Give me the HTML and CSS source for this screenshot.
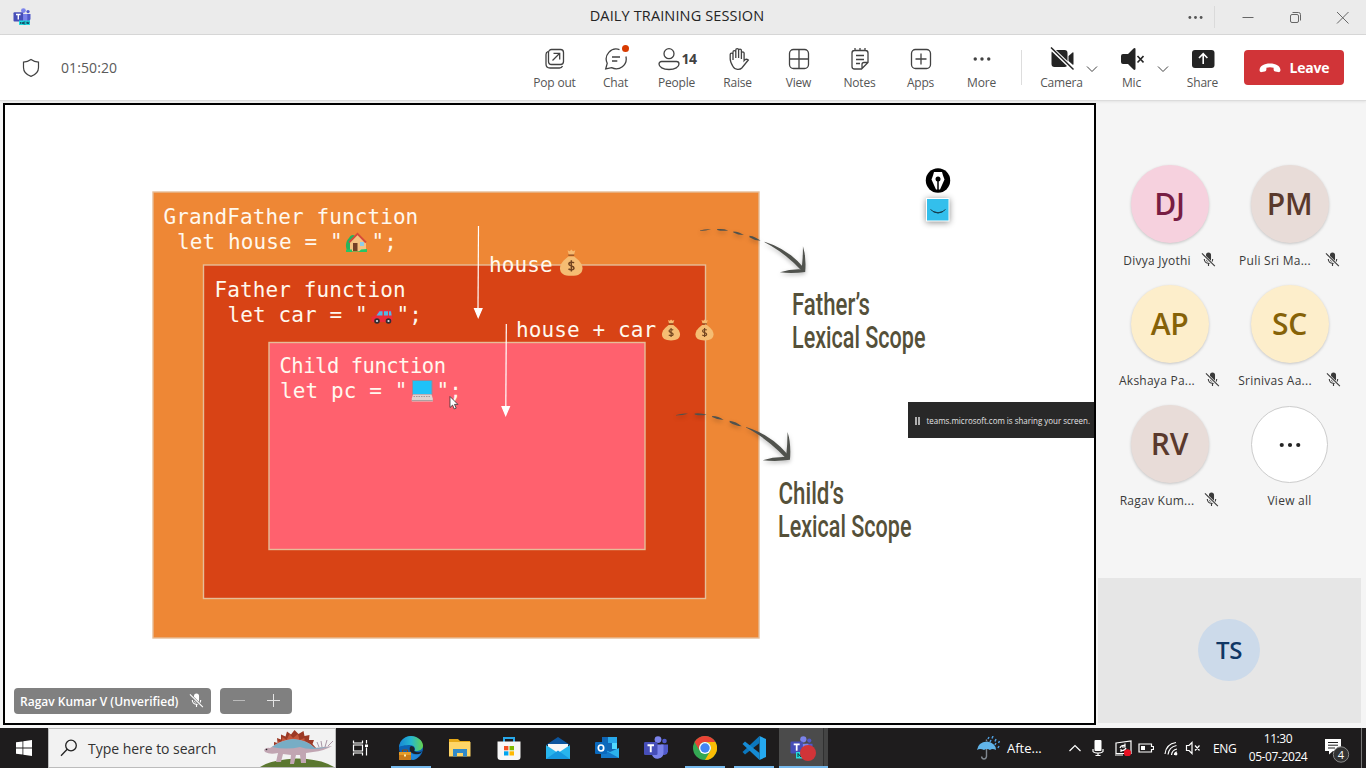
FILE: index.html
```html
<!DOCTYPE html>
<html lang="en">
<head>
<meta charset="utf-8">
<title>DAILY TRAINING SESSION</title>
<link rel="stylesheet" href="styles.css">
</head>
<body>
<svg class="defs" aria-hidden="true">
  <defs>
    <symbol id="mic-off" viewBox="0 0 16 16">
      <path d="M5.3 3.2a2.7 2.7 0 0 1 5.4 0v4.6a2.7 2.7 0 0 1-5.4 0z" fill="currentColor"/>
      <path d="M3.5 7.5a4.5 4.5 0 0 0 9 0M8 12v3" fill="none" stroke="currentColor" stroke-width="1.2"/>
      <path d="M1.3 2.2L14.2 14.8" stroke="var(--gap)" stroke-width="2.8"/>
      <path d="M1 1.5L14.8 15" stroke="currentColor" stroke-width="1.2"/>
    </symbol>
    <symbol id="bag" viewBox="0 0 24 28">
      <path d="M8.2 1.2l2.3 1 1.6-1.7 1.7 1.7 2.4-1-1.5 5H9.6z" fill="#f7b96f"/>
      <path d="M9 5.5h6v1.4H9z" fill="#8b4a20"/>
      <path d="M9 7.5h6c4 3 8.5 7 8.5 12 0 5.5-4 7.8-11.500 7.800S.5 25 .5 19.500C.5 14.500 5 10.500 9 7.500z" fill="#f5bd73"/>
      <path d="M14.800 14.200c-1-1.200-5.300-1.300-5.300 1.200s5.300 1.500 5.300 4c0 2.400-4.300 2.300-5.600.8M12.100 11.500v11.500" fill="none" stroke="#714420" stroke-width="1.500"/>
    </symbol>
    <symbol id="scope-arrow" viewBox="0 0 108 48">
      <g fill="#50524d">
        <path d="M1 5.500q6-1.900 11-1.200q-5 1.500-11 1.700z"/>
        <path d="M18 4q6-.7 11 1.300q-6 1.100-11-.4z"/>
        <path d="M34 6.300q6 .1 10.500 3.700q-6-.1-10.500-2.700z"/>
        <path d="M50 10.700q6 .8 11 5q-6-.3-11-3.700z"/>
        <path d="M65 16.500q23 7 39 26l-2.500 2.500q-17-18-36.500-28z"/>
        <path d="M103 21q3.500 11 2.200 25.500q-13 1.800-25 .3q10.500-3.300 21.500-2.800q1.300-12 1.300-23z"/>
      </g>
    </symbol>
    <symbol id="teams" viewBox="0 0 24 24">
      <circle cx="14" cy="3.600" r="3.400" fill="#7b83eb"/><circle cx="20.500" cy="5" r="2.300" fill="#5059c9"/>
      <path d="M17 8.500h7v7a4 4 0 0 1-7 2z" fill="#5059c9"/>
      <path d="M9 8.500h10.500v8a6 6 0 0 1-11.500 2.500z" fill="#7b83eb"/>
      <rect y="6" width="13.500" height="13" rx="1.300" fill="#464eb8"/>
      <path d="M3.500 9.200h6.500M6.750 9.200v7" stroke="#fff" stroke-width="1.900"/>
    </symbol>
    <symbol id="dots" viewBox="0 0 20 20"><g fill="currentColor"><circle cx="2.500" cy="10" r="1.900"/><circle cx="10" cy="10" r="1.900"/><circle cx="17.500" cy="10" r="1.900"/></g></symbol>
  </defs>
</svg>

<header class="titlebar">
  <svg class="app-logo" viewBox="0 0 18 18">
    <use href="#teams" width="18" height="17"/>
    <rect x="6" y="12.500" width="11" height="4.500" fill="#20d9df"/>
    <path d="M7.500 16v-2l2 2v-2M12.500 14h-2v2h2M10.500 15h1.500M13.500 13.800l.7 2.200.6-2.200.6 2.200.7-2.200" fill="none" stroke="#135" stroke-width=".7"/>
  </svg>
  <h1 class="meeting-title">DAILY TRAINING SESSION</h1>
  <div class="window-controls">
    <svg class="win-more" viewBox="0 0 20 20"><use href="#dots"/></svg>
    <i class="win-divider"></i>
    <svg class="win-btn" viewBox="0 0 47 34"><path d="M17.500 17.500h11" stroke="#666"/></svg>
    <svg class="win-btn" viewBox="0 0 47 34" fill="none" stroke="#666"><rect x="18.500" y="14.500" width="8" height="8" rx="1.500"/><path d="M20.500 12.500h6a2 2 0 0 1 2 2v6"/></svg>
    <svg class="win-btn" viewBox="0 0 47 34"><path d="M18 12l11.500 11.500M29.500 12L18 23.500" stroke="#666"/></svg>
  </div>
</header>

<nav class="toolbar">
  <div class="status">
    <svg class="shield" viewBox="0 0 18 20"><path d="M9 1.500c2.300 1.700 4.600 2.500 7.500 2.600v5.400c0 4.300-3 7.300-7.500 8.900-4.500-1.600-7.500-4.600-7.500-8.900V4.100C4.400 4 6.700 3.200 9 1.500z" fill="none" stroke="#424242" stroke-width="1.200"/></svg>
    <span class="timer">01:50:20</span>
  </div>
  <div class="tools">
    <div class="tool"><svg viewBox="0 0 24 24"><rect x="5.500" y="2.500" width="15" height="15" rx="3"/><path d="M5 4.500c-1.300.5-2 1.500-2 3V17c0 3 1 4 4 4h9.500c1.500 0 2.500-.7 3-2M9.500 13.500l7-7M10.500 6.300h6.200v6.200"/></svg><span>Pop out</span></div>
    <div class="tool"><svg viewBox="0 0 24 24"><path d="M15.500 2.600A10 10 0 0 0 3.200 16.300L1.700 22l5.900-1.300A10 10 0 0 0 21.900 9.500M8 10h8M8 14h5.300"/></svg><i class="unread"></i><span>Chat</span></div>
    <div class="tool people"><div class="tool-row"><svg viewBox="0 0 24 24"><circle cx="12" cy="6.700" r="5"/><path d="M4.500 14.500h15a2.500 2.500 0 0 1 2.500 2.500c0 3-4 5.500-10 5.500S2 20 2 17a2.500 2.500 0 0 1 2.500-2.500z"/></svg><b>14</b></div><span>People</span></div>
    <div class="tool"><svg viewBox="0 0 24 24"><path d="M7 13V5a1.400 1.400 0 0 1 2.800 0v6V3a1.400 1.400 0 0 1 2.800 0v8V3.500a1.400 1.400 0 0 1 2.800 0V12V6a1.400 1.400 0 0 1 2.700 0v7.500c1-1.300 2.500-1.800 4.200-.5l-6.500 8c-1.500 1.700-7 2.200-8.800-1.500C5.500 17 4.200 14.500 4.200 12V7.500a1.400 1.400 0 0 1 2.800 0"/></svg><span>Raise</span></div>
    <div class="tool"><svg viewBox="0 0 24 24"><rect x="2.500" y="2.500" width="19" height="19" rx="4"/><path d="M12 2.500v19M2.500 12h19"/></svg><span>View</span></div>
    <div class="tool"><svg viewBox="0 0 24 24"><path d="M20 15.500V6a2.500 2.500 0 0 0-2.500-2.500h-11A2.500 2.500 0 0 0 4 6v13.500A2.500 2.500 0 0 0 6.500 22h7zM20 15.500h-4a2 2 0 0 0-2 2V22M7 1v3M12 1v3M17 1v3M8 8.500h8M8 12.500h8M8 16.500h4"/></svg><span>Notes</span></div>
    <div class="tool"><svg viewBox="0 0 24 24"><rect x="2.500" y="2.500" width="19" height="19" rx="4"/><path d="M12 6.500v11M6.500 12h11"/></svg><span>Apps</span></div>
    <div class="tool"><svg class="more-dots" viewBox="0 0 20 20"><use href="#dots"/></svg><span>More</span></div>
  </div>
  <div class="devices">
    <div class="tool"><svg class="solid" viewBox="0 0 24 24"><path d="M1.500 6A3 3 0 0 1 4.500 3h10a3 3 0 0 1 3 3v11a3 3 0 0 1-3 3h-10a3 3 0 0 1-3-3zM18.500 9l4-3.500q1-.7 1 .5v11q0 1.300-1 .500l-4-3.500z"/><path d="M1 1l22 21" stroke="#fff" stroke-width="4"/><path d="M1 .5l22.500 22" stroke="#242424" stroke-width="1.500"/></svg><span>Camera</span></div>
    <svg class="chevron" viewBox="0 0 12 8"><path d="M1 1.500l5 5 5-5"/></svg>
    <div class="tool mic"><svg class="solid" viewBox="0 0 24 24"><path d="M1 9a2 2 0 0 1 2-2h5l5.500-5.600q2-1 2 .8v19.600q0 1.800-2 .8L8 17H3a2 2 0 0 1-2-2z"/><path d="M17.500 9l6 6.500m0-6.500l-6 6.500" stroke="#242424" stroke-width="1.600"/></svg><span>Mic</span></div>
    <svg class="chevron" viewBox="0 0 12 8"><path d="M1 1.500l5 5 5-5"/></svg>
    <div class="tool share"><svg class="solid" viewBox="0 0 24 24"><rect x="1" y="3" width="22.500" height="18" rx="3"/><path d="M12.200 17V7M8 11l4.200-4.300 4.200 4.300" fill="none" stroke="#fff" stroke-width="1.600"/></svg><span>Share</span></div>
  </div>
  <button class="leave"><svg viewBox="0 0 22 10"><path d="M.6 6.500C1 3 5 .5 11 .5S21 3 21.400 6.500c.2 2-.6 2.900-2.300 2.600l-2.800-.6c-1.200-.3-1.700-1-1.700-2.200V4.800q-3.600-1-7.200 0v1.500c0 1.200-.5 1.900-1.700 2.200l-2.800.6C1.200 9.400.4 8.500.6 6.500z" fill="#fff"/></svg><span>Leave</span></button>
</nav>

<main class="meeting">
  <section class="shared-screen">
    <svg class="slide" viewBox="5 105 1089 618">
      <g stroke="#e6bd98" stroke-width="1.400">
        <rect x="153" y="192" width="606" height="446" fill="#ee8735"/>
        <rect x="203.500" y="265" width="502" height="333.500" fill="#d84315"/>
        <rect x="269" y="342.500" width="376" height="207" fill="#ff616e"/>
      </g>
      <g class="code">
        <text x="163.500" y="223.500">GrandFather function</text>
        <text x="177" y="248.500">let house = "</text><text x="371.500" y="248.500">";</text>
        <text x="214.500" y="296.500">Father function</text>
        <text x="227.500" y="321.500">let car = "</text><text x="396.500" y="321.500">";</text>
        <text class="tight" x="279.500" y="373">Child function</text>
        <text x="280" y="398">let pc = "</text><text x="436.500" y="398">";</text>
        <text x="489" y="272">house</text>
        <text x="516" y="337">house + car</text>
      </g>
      <g class="house">
        <path d="M347 250c-2-4-1-9 2-12 2-4 6-4 7 0v12z" fill="#27b35c"/>
        <path d="M350 242l8-8 8 8v9h-16z" fill="#f6c381"/>
        <path d="M349 242.500l8.500-8.700 8.500 8.700" fill="none" stroke="#d64a3a" stroke-width="1.900"/>
        <path d="M353 243h4.500v8H353z" fill="#754126"/><path d="M360 242h4v4h-4z" fill="#90cde8"/>
        <path d="M346 249.500h6v2h7l2-2 6-.5v3h-21z" fill="#26c566"/>
      </g>
      <g class="car">
        <path d="M371.500 321v-4l4-1.500 3-5.500h13l1 9-1 3h-19z" fill="#ee2c38"/>
        <path d="M376.500 315.500l3-4.300h3v4.300zM384 311.200h4v4.300h-4zM389 311.200h2l.6 4.300H389z" fill="#52b9e5"/>
        <g fill="#332c31"><circle cx="377" cy="321" r="2.800"/><circle cx="388.500" cy="321" r="2.800"/></g>
        <g fill="#dedee7"><circle cx="377" cy="321" r="1.100"/><circle cx="388.500" cy="321" r="1.100"/></g>
      </g>
      <g class="laptop">
        <path d="M412.500 380.500h19.500v14h-19.500z" fill="#1fc2f8" stroke="#9c8794" stroke-width="1"/>
        <path d="M413 394.500h18.500l1.300 4v3h-21v-3z" fill="#ded2d0"/><path d="M413.500 396.500h17.500" stroke="#a4979a" stroke-dasharray="1.500 1"/><path d="M411.800 400.500h21" stroke="#aaa0a0"/>
      </g>
      <use href="#bag" x="559.500" y="249" width="23.500" height="27.500"/>
      <use href="#bag" x="661.500" y="319" width="19" height="22"/>
      <use href="#bag" x="695" y="319" width="19" height="22"/>
      <g stroke="#fff" stroke-width="1.200" fill="#fff">
        <path d="M478.500 226l-.5 84"/><path d="M474.500 308.500h7.500l-3.800 9z"/>
        <path d="M506.300 324l-.5 84"/><path d="M502 406.500h7.500l-3.800 9z"/>
      </g>
      <use class="drop" href="#scope-arrow" x="699" y="225" width="109" height="48.500"/>
      <use class="drop" href="#scope-arrow" x="675" y="409" width="118" height="52.500"/>
      <g class="scope">
        <text x="792" y="315" textLength="78" lengthAdjust="spacingAndGlyphs">Father’s</text>
        <text x="792" y="347.500" textLength="133.500" lengthAdjust="spacingAndGlyphs">Lexical Scope</text>
        <text x="778.500" y="503.500" textLength="65.500" lengthAdjust="spacingAndGlyphs">Child’s</text>
        <text x="778" y="536.500" textLength="133.500" lengthAdjust="spacingAndGlyphs">Lexical Scope</text>
      </g>
      <path d="M450 396.500v11l2.600-2.400 1.600 3.800 2-.8-1.700-3.700h3.400z" fill="#fff" stroke="#333" stroke-width=".8"/>
      <circle cx="938" cy="180.500" r="12.200"/>
      <path d="M934 172h8l1 3.500 1.500 4-4.500 10h-4l-4.500-10 1.500-4z" fill="#fff"/><circle cx="938" cy="179" r="2.500"/><path d="M938 179v11.500" stroke="#000" stroke-width="1.500"/>
      <rect class="badge" x="926.500" y="198.500" width="22.500" height="22.500" fill="#33bfec" stroke="#fff"/>
      <path d="M930.500 209.500q7.500 7 15 0M933 211.500q5 2.500 10 0" fill="none" stroke="#163d4d" stroke-width="1"/>
      <rect x="908" y="402" width="186" height="36" fill="#282828"/>
      <path d="M916 417v8M919 417v8" stroke="#ddd" stroke-width="1.500"/>
      <text class="notice" x="926.500" y="424" textLength="163.500" lengthAdjust="spacingAndGlyphs">teams.microsoft.com is sharing your screen.</text>
    </svg>
    <div class="stage-overlay">
      <div class="presenter"><span>Ragav Kumar V (Unverified)</span><svg class="mic-icon"><use href="#mic-off"/></svg></div>
      <svg class="zoom-controls" viewBox="0 0 72 26"><path d="M13 12.500h12" stroke="#bbb"/><path d="M53.500 6v13M47 12.500h13" stroke="#e4e4e4"/></svg>
    </div>
  </section>

  <aside class="roster">
    <div class="people-grid">
      <div class="person"><div class="avatar pink">DJ</div><div class="name"><span>Divya Jyothi</span><svg class="mic-icon"><use href="#mic-off"/></svg></div></div>
      <div class="person"><div class="avatar brown">PM</div><div class="name wide"><span>Puli Sri Ma...</span><svg class="mic-icon"><use href="#mic-off"/></svg></div></div>
      <div class="person"><div class="avatar gold">AP</div><div class="name"><span>Akshaya Pa...</span><svg class="mic-icon"><use href="#mic-off"/></svg></div></div>
      <div class="person"><div class="avatar gold">SC</div><div class="name wide"><span>Srinivas Aa...</span><svg class="mic-icon"><use href="#mic-off"/></svg></div></div>
      <div class="person"><div class="avatar brown">RV</div><div class="name"><span>Ragav Kum...</span><svg class="mic-icon"><use href="#mic-off"/></svg></div></div>
      <div class="person"><div class="avatar all"><svg viewBox="0 0 20 20"><use href="#dots"/></svg></div><div class="name"><span>View all</span></div></div>
    </div>
    <div class="self-tile"><div class="avatar self">TS</div></div>
  </aside>
</main>

<footer class="taskbar">
  <div class="start"><svg viewBox="0 0 16 16"><path d="M0 2.300L6.500 1.400v6.200H0zM7.300 1.300L16 0v7.600H7.300zM0 8.400h6.500v6.200L0 13.700zM7.300 8.400H16V16l-8.700-1.300z" fill="#fff"/></svg></div>
  <div class="search">
    <svg class="lens" viewBox="0 0 18 18"><circle cx="11" cy="6.500" r="5.300"/><path d="M7.200 10.300L1 16.700"/></svg>
    <span>Type here to search</span>
    <svg class="dino" viewBox="0 0 78 38">
      <path d="M3 38q10-7 36-8.500 24 0 38 8.500z" fill="#5b7730"/>
      <path d="M17 19l0-6 3.500 1-.5-5 4 1.500 0-5 4.500 2 1.500-5 4 3 3.500-4.500 4 4 5-3 1 5 5-1-.5 5 5 0-1.500 4 3.500 4z" fill="#9c3a26"/>
      <path d="M21 17l0-5 3.500 2 1-6 4 3 3-6 3.500 4 5-4 1.500 6 5-2 0 7z" fill="#c4573b"/>
      <path d="M7 21q2-3 6-2 10-8 23-9 15 1 22 9l17-2q-8 5-19 6l-7 1v10h-5l-1-8h-4l-2 9h-4l1-9-8-1-2 8h-5l2-9q-8 2-13-1z" fill="#c1a5b2"/>
      <path d="M15 18q10-7 21-8 14 1 22 9l15-1q-20 4-30 0-13 3-28 0z" fill="#77adc5"/>
      <path d="M65 18l-1-6M68 18l2-7M71 17l5-5M62 18l-2-5" stroke="#a995a5"/>
      <circle cx="9.500" cy="20.500" r=".8" fill="#222"/>
    </svg>
  </div>
  <div class="task-view"><svg viewBox="0 0 18 16" fill="none" stroke="#fff" stroke-width="1.200"><path d="M1.500.5V3h9V.5M1.500 15.500V13h9v2.500M1.500 5h9v6h-9zM14.500 0v3.500M14.500 7.500v8"/><path d="M13 4.500h3v2.500h-3z" fill="#fff" stroke="none"/></svg></div>
  <div class="apps">
    <div class="app open"><svg viewBox="0 0 24 24"><defs><linearGradient id="eg" x2="1"><stop stop-color="#1787d5"/><stop offset=".5" stop-color="#26b7cf"/><stop offset="1" stop-color="#66d34d"/></linearGradient></defs><circle cx="12" cy="12" r="12" fill="#0c63b4"/><path d="M0 11C1 4 6 0 12 0s12 4.500 12 9.500c0 4-4 6-8.500 5.500 1.500-2 0-6-4.500-6C6 9 1 10 0 11z" fill="url(#eg)"/><path d="M12 10c3 0 4.500 3 3 5 3 2 6 1.500 8 0l-2 3q-7 1-10-3-1-4 1-5z" fill="#1d2229"/><path d="M12 17q5 3 10 0-3 6-8 7-5-1-2-7z" fill="#2488d8"/><rect y="16" width="12" height="8" fill="#c87b19"/><path d="M0 16h12v3H0z" fill="#e49b27"/><path d="M3.500 16v-2h5v2" fill="none" stroke="#8e4c0b"/><path d="M5 18.500h2v2H5z" fill="#fff0b0"/></svg></div>
    <div class="app"><svg viewBox="0 0 24 24"><path d="M1 3h9l2 2h10v4H1z" fill="#e6a817"/><path d="M1 6h21.500v14.500H1z" fill="#ffd567"/><path d="M5 13h14v7.500h-4V17H9v3.500H5z" fill="#328ac8"/></svg></div>
    <div class="app"><svg viewBox="0 0 24 24"><path d="M7 6V2h10v4" fill="none" stroke="#28a8ea" stroke-width="2"/><path d="M.5 5.500h23V21a3 3 0 0 1-3 3h-17a3 3 0 0 1-3-3z" fill="#f7f7f7"/><path d="M7 10h4.400v4.300H7z" fill="#f25022"/><path d="M12.500 10H17v4.300h-4.500z" fill="#7fba00"/><path d="M7 15.300h4.400v4.200H7z" fill="#00a4ef"/><path d="M12.500 15.300H17v4.200h-4.500z" fill="#ffb900"/></svg></div>
    <div class="app"><svg viewBox="0 0 24 24"><path d="M0 9l12-8 12 8z" fill="#0c559e"/><path d="M2 8h20v9H2z" fill="#f7f7f7"/><path d="M0 9l12 8 12-8v14H0z" fill="#28b5ed"/><path d="M0 23l12-8.500L24 23z" fill="#1698df"/></svg></div>
    <div class="app"><svg viewBox="0 0 24 24"><path d="M7 1h15v18H7z" fill="#1066b5"/><path d="M13 1h9v6h-9z" fill="#28a8ea"/><path d="M17 7h5v6h-5z" fill="#50d9ff"/><path d="M6 12l9 4 9-4v10H6z" fill="#2bb3ed"/><path d="M6 12l18 10H6z" fill="#1479c9"/><rect y="6" width="12" height="12" rx="1" fill="#0a69bd"/><ellipse cx="6" cy="12" rx="2.700" ry="3" fill="none" stroke="#fff" stroke-width="1.700"/></svg></div>
    <div class="app"><svg viewBox="0 0 24 24"><use href="#teams"/></svg></div>
    <div class="app open"><svg viewBox="0 0 24 24"><circle cx="12" cy="12" r="12" fill="#34a853"/><path d="M1.600 6A12 12 0 0 1 22.400 6H12a6 6 0 0 0-5.200 9z" fill="#ea4335"/><path d="M22.400 6A12 12 0 0 1 12 24l5.200-9A6 6 0 0 0 12 6z" fill="#fbbc05"/><circle cx="12" cy="12" r="6" fill="#fff"/><circle cx="12" cy="12" r="4.700" fill="#4285f4"/></svg></div>
    <div class="app open"><svg viewBox="0 0 24 24"><path d="M17.500 0L24 3v18l-6.500 3z" fill="#25a8ef"/><path d="M17.500 0v7L3 18.500.5 16z" fill="#0b77be"/><path d="M17.500 24v-7L3 5.500.5 8z" fill="#168bd4"/></svg></div>
    <div class="app open active"><svg viewBox="0 0 26 25"><use href="#teams" width="23" height="22"/><path d="M6 16h7v6.500H6z" fill="#26dce0"/><path d="M8 21v-3.500l3 3.500v-3.500" fill="none" stroke="#133"/><circle cx="18" cy="17" r="8" fill="#d13438"/></svg></div>
  </div>
  <div class="tray">
    <svg class="weather" viewBox="0 0 24 24"><path d="M1 14Q2 6 11 5.500 20 7 20 14q-4-2-6 0-3-2-6 0-4-2-7 0z" fill="#61b4e9"/><path d="M10.500 13v7.500q-.5 2.500-2.500 2.500t-2.500-2.500M10.500 5V3.500" fill="none" stroke="#818890" stroke-width="1.400"/><path d="M13 1l-1 2M17 0l-1 2.500M15 4l-1 2M20 3l-1 2.500M23.500 5l-1 2M20 7l-1 2M23 10l-1 2" stroke="#4f9fdf" stroke-width="1.500"/></svg>
    <span class="forecast">Afte...</span>
    <svg class="t-up" viewBox="0 0 12 8"><path d="M.5 7L6 1.500 11.500 7"/></svg>
    <svg class="t-icon" viewBox="0 0 16 16"><rect x="4.500" y="0" width="7" height="11" rx="1" fill="#fff" stroke="none"/><path d="M3 9v2.500q1 1.500 5 1.500t5-1.500V9M8 13v2.500M5.500 15.500h5"/></svg>
    <svg class="t-icon cast" viewBox="0 0 18 16"><path d="M2 3l15-2v12.500H2zM1 15h8M6 8q1-3 5-2.500M11 3.500v3.500H8M12 8q-1 3-5 2.500M7 12V9"/><circle cx="13.500" cy="12.800" r="3.600" fill="#e81123" stroke="none"/></svg>
    <svg class="t-icon" viewBox="0 0 16 16"><path d="M1 4h12.500v2.500h2v3h-2V12H1z"/><path d="M3 6h4v4H3z" fill="#fff" stroke="none"/></svg>
    <svg class="t-icon wifi" viewBox="0 0 16 16"><path d="M2 14Q3 4 13 2.500M5 14.500Q6 7 13.500 5.500M8.500 15Q9 10 14 9M11.500 15q0-3 2.500-3"/><circle cx="13" cy="14" r="1.400" fill="#fff" stroke="none"/></svg>
    <svg class="t-icon vol" viewBox="0 0 16 16"><path d="M1.500 5.500H4l3-3v11l-3-3H1.500zM10 5.500l4.500 5M14.500 5.500l-4.500 5"/></svg>
    <span class="lang">ENG</span>
    <div class="clock"><span>11:30</span><span class="date">05-07-2024</span></div>
    <svg class="notify" viewBox="0 0 26 26"><path d="M1 1h16v12H9l-4 3.500V13H1z" fill="#fff"/><path d="M4 4.500h10M4 7.200h10M4 10h7" stroke="#222"/><circle cx="17" cy="16.500" r="7.700" fill="#333" stroke="#888"/><text x="17" y="20.500">4</text></svg>
    <i class="peek"></i>
  </div>
</footer>
</body>
</html>
```
FILE: styles.css
```css
* { box-sizing: border-box; }
body { margin: 0; width: 1366px; height: 768px; overflow: hidden; display: flex; flex-direction: column; font-family: "Open Sans", "Noto Sans", sans-serif; font-size: 12px; color: #424242; background: #f5f5f5; }
svg { display: block; flex: none; }
span { white-space: nowrap; }
.defs { position: absolute; width: 0; height: 0; }

.titlebar { height: 35px; flex: none; background: #ebebeb; border-bottom: 1px solid #d6d6d6; display: grid; grid-template-columns: 1fr auto 1fr; align-items: center; padding-left: 13px; }
.app-logo { width: 18px; height: 18px; }
.meeting-title { margin: 0 25px 2px 0; font-size: 14.500px; line-height: 20px; font-weight: 400; letter-spacing: .130px; color: #242424; }
.window-controls { display: flex; justify-content: flex-end; align-items: center; height: 34px; }
.win-more { width: 15px; height: 15px; color: #555; margin-right: 11px; }
.win-divider { width: 1px; height: 22px; background: #dadada; margin-right: 10px; }
.win-btn { width: 47px; height: 34px; }

.toolbar { height: 66px; flex: none; background: #fff; border-bottom: 1px solid #dcdcdc; display: flex; align-items: center; box-shadow: 0 1px 2px #e4e4e4; }
.status { width: 524px; display: flex; align-items: center; padding-left: 22px; gap: 21px; }
.shield { width: 18px; height: 20px; }
.timer { font-size: 14px; letter-spacing: .1px; color: #5a5a5a; }
.tools { display: flex; width: 498px; height: 35px; align-items: center; border-right: 1px solid #ddd; }
.tool { width: 61px; height: 46px; display: flex; flex-direction: column; align-items: center; position: relative; gap: 4px; padding-top: 2px; }
.tool > span { font-size: 12px; line-height: 16px; letter-spacing: -.2px; color: #555; }
.tool svg { width: 24px; height: 24px; fill: none; stroke: #424242; stroke-width: 1.300; }
.tool svg.more-dots { width: 18px; height: 24px; stroke: none; }
.tool svg.solid { fill: #242424; stroke: none; }
.tool-row { display: flex; align-items: center; gap: 1px; }
.tool-row b { font-size: 14px; line-height: 20px; font-weight: 700; letter-spacing: -.6px; }
.unread { position: absolute; right: 17px; top: 0; width: 7px; height: 7px; border-radius: 50%; background: #d83b01; }
.devices { display: flex; align-items: center; padding-left: 9px; width: 222px; }
.chevron { width: 12px; height: 8px; fill: none; stroke: #424242; margin-top: 3px; }
.devices .tool + .chevron { margin-left: -6px; }
.devices .chevron + .tool { margin-left: 3px; }
.devices .mic { margin-right: 1px; }
.devices .mic { width: 61px; }
.devices .mic + .chevron { margin-left: -6px; }
.leave { width: 100px; height: 35px; border: 0; border-radius: 4px; background: #d13438; color: #fff; display: flex; align-items: center; justify-content: center; gap: 9px; font: 700 14px "Open Sans", sans-serif; letter-spacing: -.2px; padding: 0; }
.leave svg { width: 22px; height: 10px; }

.meeting { height: 627px; display: flex; flex: none; padding-top: 2px; }
.shared-screen { width: 1093px; height: 622px; margin-left: 3px; border: 2px solid #000; background: #fff; position: relative; }
.slide { width: 1089px; height: 618px; }
.code text { font: 21px "DejaVu Sans Mono", monospace; letter-spacing: .1px; fill: #fff8ee; white-space: pre; }
.code .tight { font-size: 20.500px; letter-spacing: -.48px; }
.scope text { font: 500 31px Roboto, sans-serif; fill: #555039; }
.notice { font: 9.500px "Open Sans", sans-serif; fill: #e4e4e4; }
.drop { filter: drop-shadow(0 2px 2px #0004); }
.badge { filter: drop-shadow(0 1px 3px #0007); }
.stage-overlay { position: absolute; left: 9px; bottom: 9px; display: flex; gap: 9px; }
.presenter { --gap: #808080; width: 197px; height: 26px; border-radius: 4px; background: #808080; color: #fff; display: flex; align-items: center; justify-content: space-between; padding: 0 7px 0 6px; font-weight: 600; }
.presenter svg { margin-top: -2px; }
.zoom-controls { width: 72px; height: 26px; border-radius: 4px; background: #808080; }
.mic-icon { width: 15px; height: 15px; }

.roster { --gap: #f5f5f5; width: 268px; margin-left: 2px; color: #3a3a3a; }
.people-grid { display: grid; grid-template-columns: 120px 120px; grid-auto-rows: 120px; padding: 62px 0 0 11.500px; height: 475px; }
.person { display: flex; flex-direction: column; align-items: center; gap: 7px; }
.avatar { width: 78px; height: 78px; border-radius: 50%; display: flex; align-items: center; justify-content: center; font-size: 30px; line-height: 36px; font-weight: 600; box-shadow: 0 1px 3px #0003; flex: none; letter-spacing: -.3px; }
.pink { background: #f6d1de; color: #781d43; }
.brown { background: #e8dcd8; color: #5a392c; }
.gold { background: #fdeecb; color: #866208; }
.all { background: #fff; border: 1px solid #ccc; box-shadow: none; color: #242424; width: 77px; height: 77px; margin-top: 1px; }
.all svg { width: 22px; height: 22px; }
.name { display: flex; align-items: center; gap: 10px; height: 20px; letter-spacing: .250px; }
.name .mic-icon { margin-top: -2px; }
.name.wide { gap: 14px; }
.self-tile { width: 263px; height: 145px; background: #e6e6e6; display: flex; align-items: center; justify-content: center; }
.self { width: 62px; height: 62px; margin: 0 1px 1px 0; font-size: 24px; background: #ccdaea; color: #103664; box-shadow: none; }

.taskbar { height: 40px; flex: none; background: #1e1c1d; display: flex; color: #fff; }
.start { width: 48px; display: flex; align-items: center; justify-content: center; }
.start svg { width: 16px; height: 16px; }
.search { width: 288px; background: #f2f2f2; border: 1px solid #bcbcbc; color: #333; display: flex; align-items: center; padding-left: 11px; }
.search span { font-size: 14px; letter-spacing: -.030px; margin-left: 10px; flex: 1; }
.lens { width: 18px; height: 18px; fill: none; stroke: #222; stroke-width: 1.300; }
.dino { width: 78px; height: 38px; align-self: flex-end; }
.task-view { width: 50.500px; display: flex; align-items: center; padding-left: 16px; }
.task-view svg { width: 18px; height: 16px; }
.apps { display: flex; }
.app { width: 49px; display: flex; align-items: center; justify-content: center; position: relative; }
.app svg { width: 24px; height: 24px; }
.app.open::after { content: ""; position: absolute; bottom: 0; left: 4px; right: 5px; height: 2px; background: #76b9ed; }
.app.active { background: linear-gradient(90deg, #4b4b4b 44px, #303030 44px, #303030 45px, #444 45px); }
.app.active::after { left: 0; right: 0; }
.app.active svg { width: 26px; height: 25px; }
.tray { margin-left: auto; width: 390px; display: flex; align-items: center; }
.weather { width: 24px; height: 24px; }
.forecast { width: 37px; font-size: 13px; margin: 0 25px 0 7px; }
.t-up { width: 12px; height: 8px; fill: none; stroke: #fff; stroke-width: 1.200; margin-right: 9px; }
.t-icon { width: 16px; height: 16px; fill: none; stroke: #fff; stroke-width: 1.200; margin-right: 9px; }
.t-icon.cast { width: 18px; margin-right: 6px; margin-left: -1px; }
.t-icon.wifi { margin-right: 6px; }
.t-icon.vol { margin-right: 12px; }
.lang { width: 24px; letter-spacing: -.4px; }
.clock { width: 60px; margin-left: 11px; display: flex; flex-direction: column; align-items: center; line-height: 18px; letter-spacing: -.4px; }
.notify { width: 26px; height: 26px; margin-left: 16px; margin-top: 5px; }
.notify text { font: 11px "Open Sans", sans-serif; fill: #fff; text-anchor: middle; }
.peek { width: 1px; height: 40px; background: #777; margin-left: auto; margin-right: 4px; }
```
